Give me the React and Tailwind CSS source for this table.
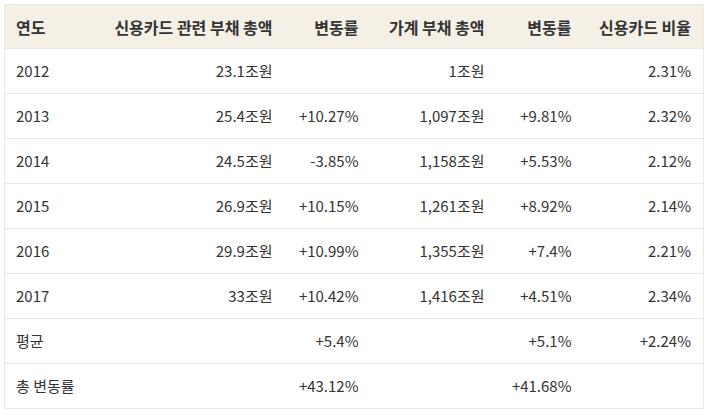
import React from "react";

const rows = [
  ["2012", "23.1조원", "", "1조원", "", "2.31%"],
  ["2013", "25.4조원", "+10.27%", "1,097조원", "+9.81%", "2.32%"],
  ["2014", "24.5조원", "-3.85%", "1,158조원", "+5.53%", "2.12%"],
  ["2015", "26.9조원", "+10.15%", "1,261조원", "+8.92%", "2.14%"],
  ["2016", "29.9조원", "+10.99%", "1,355조원", "+7.4%", "2.21%"],
  ["2017", "33조원", "+10.42%", "1,416조원", "+4.51%", "2.34%"],
  ["평균", "", "+5.4%", "", "+5.1%", "+2.24%"],
  ["총 변동률", "", "+43.12%", "", "+41.68%", ""],
];

const headers = ["연도", "신용카드 관련 부채 총액", "변동률", "가계 부채 총액", "변동률", "신용카드 비율"];

export default function App() {
  return (
    <div
      className="bg-white p-1 w-[707px] h-[416px] text-[#333]"
      style={{ fontFamily: '"Noto Sans CJK KR", "Noto Sans", sans-serif' }}
    >
      <table className="table-fixed border-collapse w-[699px] text-[15px] border border-[#ece8dc]">
        <colgroup>
          <col className="w-[90px]" />
          <col className="w-[190px]" />
          <col className="w-[86px]" />
          <col className="w-[126px]" />
          <col className="w-[87px]" />
          <col className="w-[120px]" />
        </colgroup>
        <thead>
          <tr className="bg-[#f4f0e6] h-[44px]">
            {headers.map((h, i) => (
              <th
                key={i}
                className={`px-3 text-[16px] font-bold ${i === 0 ? "text-left pl-[11px]" : "text-right"}`}
              >
                {h}
              </th>
            ))}
          </tr>
        </thead>
        <tbody>
          {rows.map((r, ri) => (
            <tr key={ri} className="h-[45px] border-t border-[#e8e8e8]">
              {r.map((c, ci) => (
                <td key={ci} className={`px-3 ${ci === 0 ? "text-left pl-[11px]" : "text-right"}`}>
                  {c}
                </td>
              ))}
            </tr>
          ))}
        </tbody>
      </table>
    </div>
  );
}
